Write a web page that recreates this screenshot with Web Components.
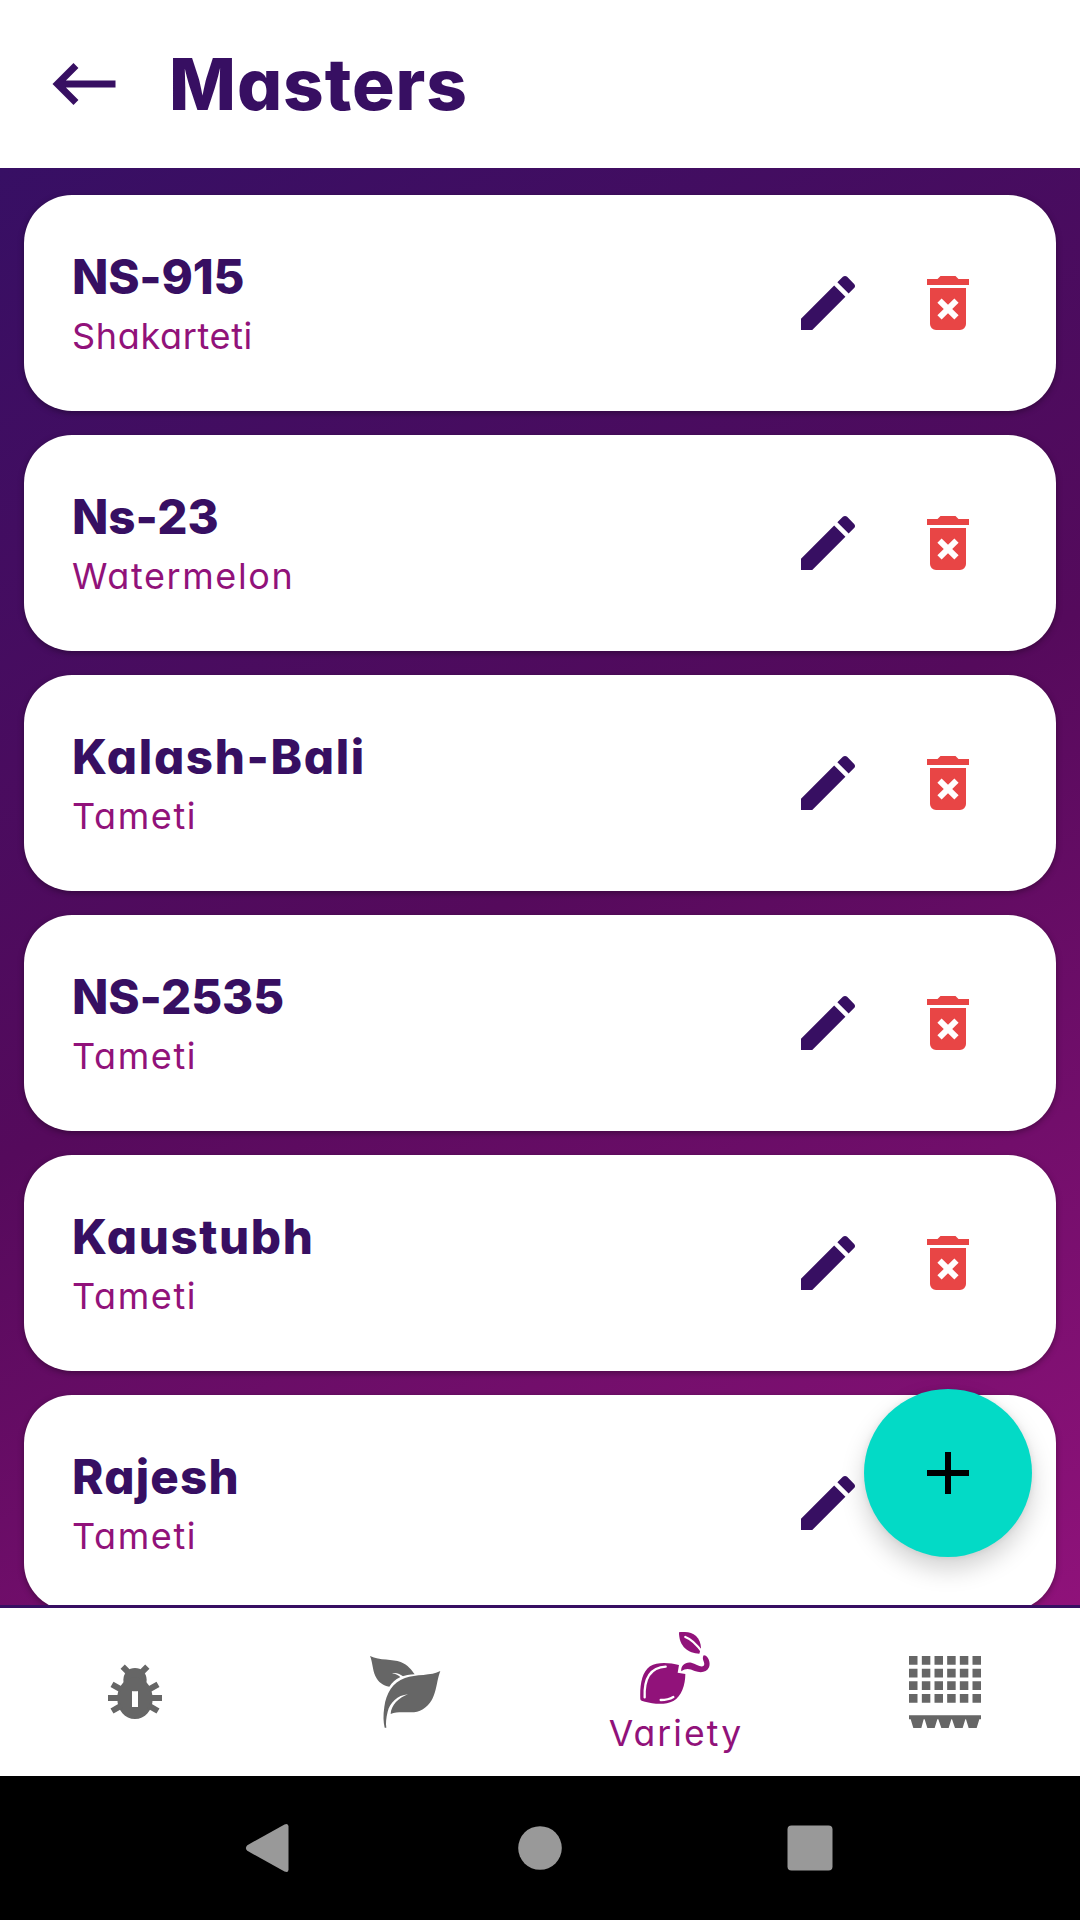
<!DOCTYPE html>
<html lang="en">
<head>
<meta charset="utf-8">
<title>Masters</title>
<style>
  body {
    margin: 0;
    font-family: Inter, "Open Sans", sans-serif;
    font-feature-settings: "cv11", "ss03";
    --primary: #370f62;
    --accent: #91127a;
    --danger: #e84545;
    --muted: #666;
  }
</style>
</head>
<body>
<masters-screen>
  <app-header slot="header" heading="Masters"></app-header>
  <variety-card name="NS-915" crop="Shakarteti" style="--name-spacing: -0.2px; --crop-spacing: 0.65px"></variety-card>
  <variety-card name="Ns-23" crop="Watermelon" style="--name-spacing: 0"></variety-card>
  <variety-card name="Kalash-Bali" crop="Tameti" style="--name-spacing: 1.65px"></variety-card>
  <variety-card name="NS-2535" crop="Tameti" style="--name-spacing: -0.1px"></variety-card>
  <variety-card name="Kaustubh" crop="Tameti" style="--name-spacing: 1.6px"></variety-card>
  <variety-card name="Rajesh" crop="Tameti" style="--name-spacing: 1.2px"></variety-card>
  <add-button slot="fab"></add-button>
  <tab-bar slot="tabs">
    <tab-item icon="bug"></tab-item>
    <tab-item icon="leaf"></tab-item>
    <tab-item icon="fruit" label="Variety" active></tab-item>
    <tab-item icon="field"></tab-item>
  </tab-bar>
  <system-bar slot="system"></system-bar>
</masters-screen>

<script>
const ICONS = {
  back: '<svg viewBox="0 0 24 24"><path d="M21 11H6.83l3.58-3.59L9 6l-6 6 6 6 1.41-1.41L6.83 13H21z"/></svg>',
  pencil: '<svg viewBox="0 0 24 24"><path d="M20.71 7.04c.39-.39.39-1.04 0-1.41l-2.34-2.34c-.37-.39-1.02-.39-1.41 0l-1.84 1.83 3.75 3.75M3 17.25V21h3.75L17.81 9.93l-3.75-3.75z"/></svg>',
  trash: '<svg viewBox="0 0 24 24"><path d="M6 19a2 2 0 0 0 2 2h8a2 2 0 0 0 2-2V7H6zM8.46 11.88l1.41-1.41L12 12.59l2.12-2.12 1.41 1.41L13.41 14l2.12 2.12-1.41 1.41L12 15.41l-2.12 2.12-1.41-1.41L10.59 14zM15.5 4l-1-1h-5l-1 1H5v2h14V4z"/></svg>',
  plus: '<svg viewBox="0 0 24 24"><path d="M19 13h-6v6h-2v-6H5v-2h6V5h2v6h6z"/></svg>',
  bug: `<svg viewBox="57 48 216 216">
    <circle cx="165" cy="119" r="35"/>
    <path fill-rule="evenodd" d="M165 112C136 112 112 140 112 176C112 211 135 237 165 237S218 211 218 176C218 140 194 112 165 112M156 147h18v54h-18z"/>
    <path d="M84 165h30v18H84zM216 165h30v18h-30z"/>
    <path fill="none" stroke="currentColor" stroke-width="18" d="M96 133l28 16M234 133l-28 16M96 213l28-16M234 213l-28-16M128 80l18 18M202 80l-18 18"/>
  </svg>`,
  leaf: `<svg viewBox="57 48 216 216">
    <path d="M60 48C90 62 128 57 152 66C174 74 185 91 194 103C180 103 164 106 150 112C136 118 126 129 118 140C99 137 85 127 76 108C67 88 68 66 60 48"/>
    <path fill="#fff" d="M126 100C138 97 150 102 161 110L153 113C146 105 137 102 126 100"/>
    <path d="M271 93C245 108 197 102 165 114C127 128 109 160 103 200C99 226 100 246 104 263H109C107 250 108 235 113 215C120 188 142 166 174 163C146 173 123 196 122 222C150 211 180 223 210 212C262 190 256 130 271 93"/>
  </svg>`,
  fruit: `<svg viewBox="147 96 216 216">
    <path d="M151 298C149 258 155 216 180 199C203 184 240 188 267 195L263 218L286 222C286 254 275 289 250 303C225 316 190 312 165 305C157 303 152 303 151 298"/>
    <path d="M274 214C271 196 288 184 304 188C319 192 333 204 341 197C348 190 333 178 341 166C355 166 363 190 357 202C350 218 331 219 314 213C299 206 288 203 274 214"/>
    <path d="M267 97C301 92 331 104 333 144L328 161C295 160 267 141 267 97"/>
    <path fill="none" stroke="#fff" stroke-width="7" stroke-linecap="round" d="M164 292C162 245 174 203 227 200M212 300C228 300 240 297 250 291M286 111C306 118 322 136 338 158"/>
  </svg>`,
  field: `<svg viewBox="57 48 216 216">
    <path d="${[48, 86.2, 124, 162].map(y =>
      [57, 95.5, 133.5, 171.5, 209.5, 247.5].map(x => `M${x} ${y}h25.5v26h-25.5z`).join('')).join('')}"/>
    <path d="M57 226H273V238H268L260 264H236L228 238H226L218 264H195L186 238H184L176 264H154L145 238H142L134 264H112L104 238H101L94 264H70L62 238H57z"/>
  </svg>`,
  sysBack: '<svg viewBox="0 0 72 72"><path d="M13.300 33.200L50.500 12.400Q54.500 10.800 54.500 14.500V57.500Q54.500 61.200 50.500 59.600L13.300 38.800Q10.500 36 13.300 33.200z"/></svg>',
  sysHome: '<svg viewBox="0 0 72 72"><circle cx="36" cy="36" r="21.8"/></svg>',
  sysRecent: '<svg viewBox="0 0 72 72"><rect x="13.500" y="13.500" width="45" height="45" rx="4"/></svg>'
};

class BaseElement extends HTMLElement {
  constructor() {
    super();
    this.attachShadow({ mode: 'open' });
  }

  connectedCallback() {
    this.shadowRoot.innerHTML = this.render();
  }
}

class MastersScreen extends BaseElement {
  render() {
    return `
      <style>
        :host {
          position: relative;
          display: flex;
          flex-direction: column;
          width: 1080px;
          height: 1920px;
          overflow: hidden;
        }

        main {
          flex: 1;
          min-height: 0;
          display: flex;
          flex-direction: column;
          gap: 24px;
          padding: 27px 24px 0;
          overflow: hidden;
          background: linear-gradient(153deg, #370f64, #550a5c 50%, #8f127a);
        }
      </style>
      <slot name="header"></slot>
      <main><slot></slot></main>
      <slot name="tabs"></slot>
      <slot name="system"></slot>
      <slot name="fab"></slot>
    `;
  }
}

class AppHeader extends BaseElement {
  render() {
    return `
      <style>
        :host {
          display: flex;
          align-items: center;
          gap: 43px;
          flex: none;
          height: 168px;
          padding-left: 42px;
          box-sizing: border-box;
          background: #fff;
          color: var(--primary);
        }

        svg {
          width: 84px;
          height: 84px;
          fill: currentColor;
        }

        h1 {
          margin: 0;
          font-size: 71px;
          line-height: 84px;
          font-weight: 770;
          letter-spacing: 0.9px;
        }
      </style>
      ${ICONS.back}
      <h1>${this.getAttribute('heading')}</h1>
    `;
  }
}

class VarietyCard extends BaseElement {
  render() {
    return `
      <style>
        :host {
          display: flex;
          align-items: center;
          gap: 48px;
          flex: none;
          height: 216px;
          padding: 0 72px 0 48px;
          box-sizing: border-box;
          border-radius: 48px;
          background: #fff;
          box-shadow: 0 2px 6px rgba(0, 0, 0, 0.35);
        }

        .text {
          flex: 1;
          padding-top: 3px;
        }

        h2,
        p {
          margin: 0;
          white-space: nowrap;
        }

        h2 {
          color: var(--primary);
          font-size: 47.5px;
          line-height: 64px;
          font-weight: 780;
          letter-spacing: var(--name-spacing, 0);
        }

        p {
          color: var(--accent);
          font-size: 36px;
          line-height: 55px;
          font-weight: 380;
          letter-spacing: var(--crop-spacing, 1.6px);
        }

        svg {
          flex: none;
          width: 72px;
          height: 72px;
          fill: var(--primary);
        }

        svg:last-child {
          fill: var(--danger);
        }
      </style>
      <div class="text">
        <h2>${this.getAttribute('name')}</h2>
        <p>${this.getAttribute('crop')}</p>
      </div>
      ${ICONS.pencil}
      ${ICONS.trash}
    `;
  }
}

class AddButton extends BaseElement {
  render() {
    return `
      <style>
        :host {
          position: absolute;
          right: 48px;
          bottom: 363px;
          display: grid;
          place-items: center;
          width: 168px;
          height: 168px;
          border-radius: 50%;
          background: #03dac6;
          box-shadow: 0 12px 24px rgba(0, 0, 0, 0.18), 0 0 6px rgba(0, 0, 0, 0.08);
        }

        svg {
          width: 72px;
          height: 72px;
        }
      </style>
      ${ICONS.plus}
    `;
  }
}

class TabBar extends BaseElement {
  render() {
    return `
      <style>
        :host {
          display: grid;
          grid-template-columns: repeat(4, 1fr);
          flex: none;
          height: 171px;
          box-sizing: border-box;
          border-top: 3px solid var(--primary);
          background: #fff;
        }
      </style>
      <slot></slot>
    `;
  }
}

class TabItem extends BaseElement {
  render() {
    const label = this.getAttribute('label');
    return `
      <style>
        :host {
          display: flex;
          flex-direction: column;
          align-items: center;
          justify-content: center;
          color: var(--muted);
        }

        :host([active]) {
          color: var(--accent);
        }

        svg {
          width: 72px;
          height: 72px;
          fill: currentColor;
        }

        span {
          font-size: 35.5px;
          line-height: 48px;
          font-weight: 380;
          margin-top: 6px;
          margin-bottom: -6px;
          padding-left: 2px;
          letter-spacing: 2.1px;
        }
      </style>
      ${ICONS[this.getAttribute('icon')]}
      ${label ? `<span>${label}</span>` : ''}
    `;
  }
}

class SystemBar extends BaseElement {
  render() {
    return `
      <style>
        :host {
          display: flex;
          align-items: center;
          justify-content: center;
          gap: 198px;
          flex: none;
          height: 144px;
          background: #000;
        }

        svg {
          width: 72px;
          height: 72px;
          fill: #999;
        }
      </style>
      ${ICONS.sysBack}
      ${ICONS.sysHome}
      ${ICONS.sysRecent}
    `;
  }
}

customElements.define('masters-screen', MastersScreen);
customElements.define('app-header', AppHeader);
customElements.define('variety-card', VarietyCard);
customElements.define('add-button', AddButton);
customElements.define('tab-bar', TabBar);
customElements.define('tab-item', TabItem);
customElements.define('system-bar', SystemBar);
</script>
</body>
</html>
